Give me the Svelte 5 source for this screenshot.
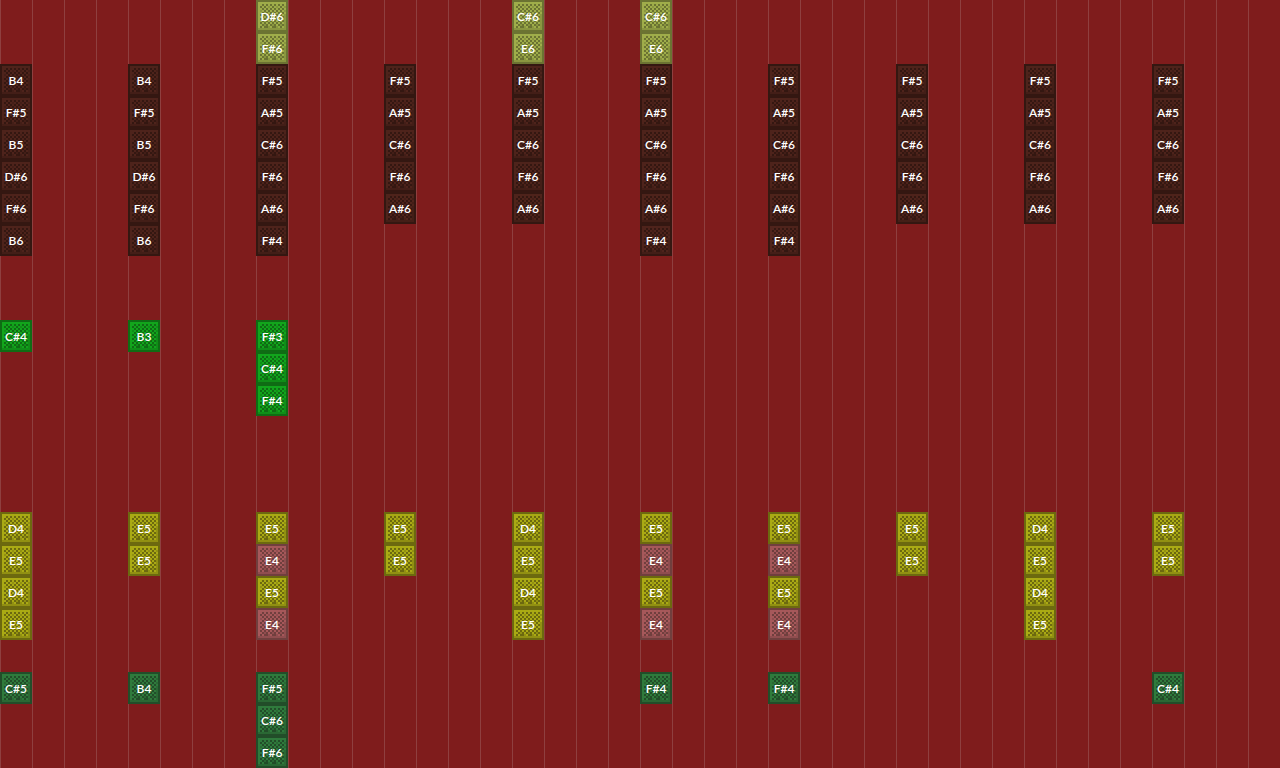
<script lang="ts">
	type Block = { col: number; row: number; key: string; kind: string };

	// '#' is a dark pixel of the 16x16 block face, 'o' a half shaded one
	const face = [
		'################',
		'#..............#',
		'#..#.#.#.#.#.#.#',
		'#.#.#.o.#.o.#.o#',
		'#..#.#.#.#.#.#.#',
		'#.o.#.#.#.#.#.o#',
		'#..#.#.#.#.#.#.#',
		'#.#.#.#.#.#.#.o#',
		'#..#.#.#.#.#.#o#',
		'#.#.#.#.#.#.#.o#',
		'#..#.#.#.#.#.#o#',
		'#.#.#.#.#.#.#.o#',
		'#..#o#.#o#.#o#o#',
		'#.#.##o.##o.#.o#',
		'#oooooooooooooo#',
		'################'
	];

	function pixels(mark: string): string {
		return face
			.flatMap((line, y) => [...line].map((c, x) => (c === mark ? `M${x} ${y}h1v1h-1z` : '')))
			.join('');
	}

	// tick, first layer, instrument, keys going down
	const chords: [number, number, string, string][] = [
		[8, 0, 'guitar', 'D#6 F#6'],
		[16, 0, 'guitar', 'C#6 E6'],
		[20, 0, 'guitar', 'C#6 E6'],
		[0, 2, 'bass', 'B4 F#5 B5 D#6 F#6 B6'],
		[4, 2, 'bass', 'B4 F#5 B5 D#6 F#6 B6'],
		[8, 2, 'bass', 'F#5 A#5 C#6 F#6 A#6 F#4'],
		[12, 2, 'bass', 'F#5 A#5 C#6 F#6 A#6'],
		[16, 2, 'bass', 'F#5 A#5 C#6 F#6 A#6'],
		[20, 2, 'bass', 'F#5 A#5 C#6 F#6 A#6 F#4'],
		[24, 2, 'bass', 'F#5 A#5 C#6 F#6 A#6 F#4'],
		[28, 2, 'bass', 'F#5 A#5 C#6 F#6 A#6'],
		[32, 2, 'bass', 'F#5 A#5 C#6 F#6 A#6'],
		[36, 2, 'bass', 'F#5 A#5 C#6 F#6 A#6'],
		[0, 10, 'bit', 'C#4'],
		[4, 10, 'bit', 'B3'],
		[8, 10, 'bit', 'F#3 C#4 F#4'],
		[0, 16, 'click', 'D4 E5 D4 E5'],
		[4, 16, 'click', 'E5 E5'],
		[8, 16, 'click', 'E5 *E4 E5 *E4'],
		[12, 16, 'click', 'E5 E5'],
		[16, 16, 'click', 'D4 E5 D4 E5'],
		[20, 16, 'click', 'E5 *E4 E5 *E4'],
		[24, 16, 'click', 'E5 *E4 E5 *E4'],
		[28, 16, 'click', 'E5 E5'],
		[32, 16, 'click', 'D4 E5 D4 E5'],
		[36, 16, 'click', 'E5 E5'],
		[0, 21, 'bassdrum', 'C#5'],
		[4, 21, 'bassdrum', 'B4'],
		[8, 21, 'bassdrum', 'F#5 C#6 F#6'],
		[20, 21, 'bassdrum', 'F#4'],
		[24, 21, 'bassdrum', 'F#4'],
		[36, 21, 'bassdrum', 'C#4']
	];

	// a star marks a snare hit inside a click chord
	const blocks: Block[] = chords.flatMap(([tick, layer, kind, keys]) =>
		keys.split(' ').map((key, i) => ({
			col: tick + 1,
			row: layer + i + 1,
			key: key.replace('*', ''),
			kind: key.startsWith('*') ? 'snare' : kind
		}))
	);
</script>

<svg class="defs" aria-hidden="true">
	<symbol id="face" viewBox="0 0 16 16">
		<path d={pixels('#')} fill="currentColor" shape-rendering="crispEdges" />
		<path d={pixels('o')} fill="currentColor" fill-opacity="0.4" shape-rendering="crispEdges" />
	</symbol>
</svg>

<main class="editor">
	{#each blocks as block}
		<div class="block {block.kind}" style="grid-column: {block.col}; grid-row: {block.row}">
			<svg class="face" aria-hidden="true"><use href="#face" /></svg>
			<span class="key">{block.key}</span>
		</div>
	{/each}
</main>

<style>
	:global(body) {
		margin: 0;
		background: #7f1c1c;
	}
	.defs {
		display: none;
	}
	.editor {
		display: grid;
		grid-template-rows: repeat(24, 32px);
		grid-auto-columns: 32px;
		min-height: 100vh;
		overflow: hidden;
		background: repeating-linear-gradient(to right, #8f3f3f 0 1px, transparent 1px 32px);
		font-family: Lato, sans-serif;
	}
	.block {
		display: grid;
		place-items: center;
		width: 32px;
		height: 32px;
	}
	.face,
	.key {
		grid-area: 1 / 1;
	}
	.face {
		width: 32px;
		height: 32px;
	}
	.key {
		z-index: 1;
		padding-top: 2px;
		color: #fff;
		font-size: 12px;
		font-weight: 600;
		line-height: 16px;
	}
	.guitar {
		background: #9fad4a;
		color: #6b7332;
	}
	.bass {
		background: #4e231b;
		color: #341711;
	}
	.bit {
		background: #12a51c;
		color: #0f6c14;
	}
	.click {
		background: #aaaa14;
		color: #6c690f;
	}
	.snare {
		background: #a6585a;
		color: #703f3e;
	}
	.bassdrum {
		background: #2f7a3c;
		color: #224d29;
	}
</style>
